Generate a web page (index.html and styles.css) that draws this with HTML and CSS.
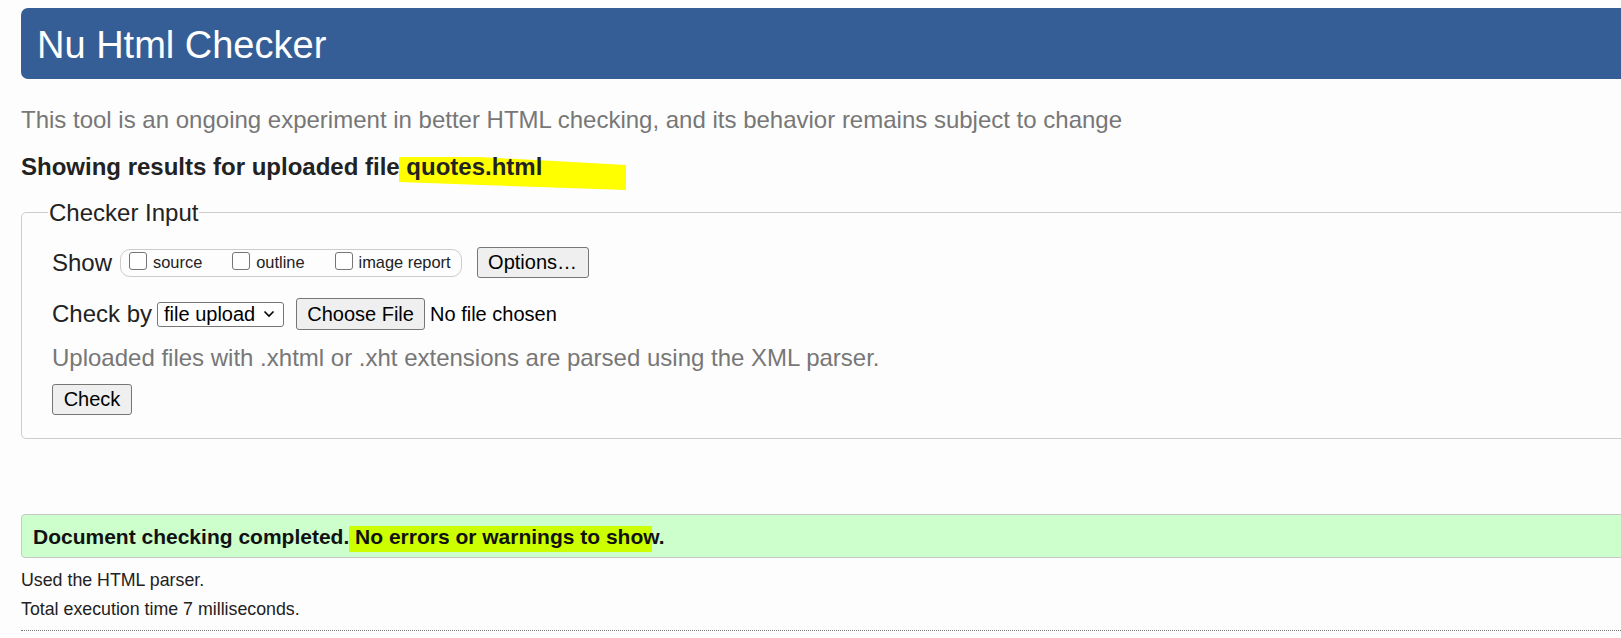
FILE: index.html
```html
<!DOCTYPE html>
<html lang="en">
<head>
<meta charset="utf-8">
<title>Showing results for quotes.html - Nu Html Checker</title>
<link rel="stylesheet" href="styles.css">
</head>
<body>
<div class="page">
  <header class="masthead">
    <h1>Nu Html Checker</h1>
  </header>
  <p class="tagline">This tool is an ongoing experiment in better HTML checking, and its behavior remains subject to change</p>
  <h2 class="result-title">
    <span class="title-text">Showing results for uploaded file quotes.html</span>
    <svg class="marker-yellow" width="240" height="40" viewBox="0 0 240 40" aria-hidden="true">
      <polygon points="0,4 80,4 227,12 227,37 140,34 0,29" fill="#ffff00"/>
    </svg>
  </h2>
  <form class="checker-form">
    <fieldset class="checker-input">
      <legend>Checker Input</legend>
      <div class="row row-show">
        <span class="row-label">Show</span>
        <div class="show-group">
          <label class="opt"><span class="box"></span>source</label>
          <label class="opt"><span class="box"></span>outline</label>
          <label class="opt"><span class="box"></span>image report</label>
        </div>
        <span class="btn btn-options">Options…</span>
      </div>
      <div class="row row-checkby">
        <span class="row-label">Check by</span>
        <span class="select">file upload
          <svg class="chev" width="12" height="8" viewBox="0 0 12 8" aria-hidden="true"><path d="M1.5 1.5 L6 6 L10.5 1.5" fill="none" stroke="#000" stroke-width="1.6"/></svg>
        </span>
        <span class="btn btn-file">Choose File</span>
        <span class="file-status">No file chosen</span>
      </div>
      <p class="hint">Uploaded files with .xhtml or .xht extensions are parsed using the XML parser.</p>
      <span class="btn btn-check">Check</span>
    </fieldset>
  </form>
  <div class="success">
    <span class="marker-lime" aria-hidden="true"></span>
    <span class="success-text">Document checking completed. No errors or warnings to show.</span>
  </div>
  <p class="meta meta-first">Used the HTML parser.</p>
  <p class="meta">Total execution time 7 milliseconds.</p>
  <div class="dotted-rule"></div>
</div>
</body>
</html>
```
FILE: styles.css
```css
html, body {
  margin: 0;
  padding: 0;
  overflow: hidden;
  background: #fdfdfd;
}
body {
  font-family: "Liberation Sans", Arial, sans-serif;
  color: #222;
}
.page {
  width: 1700px;
  padding: 8px 0 0 21px;
}
.masthead {
  height: 71px;
  background: #365e96;
  border-radius: 7px;
  display: flex;
  align-items: center;
  padding-left: 16px;
}
.masthead h1 {
  margin: 0;
  font-size: 38px;
  font-weight: normal;
  color: #fff;
  line-height: 44px;
  position: relative;
  top: 1px;
}
.tagline {
  margin: 27px 0 0;
  font-size: 24px;
  line-height: 28px;
  color: #777;
}
.result-title {
  position: relative;
  margin: 19px 0 0;
  font-size: 24px;
  line-height: 28px;
  font-weight: bold;
  color: #222;
}
.title-text {
  position: relative;
  z-index: 1;
}
.marker-yellow {
  position: absolute;
  left: 378px;
  top: 0px;
  z-index: 0;
}
.checker-form {
  margin: 0;
}
.checker-input {
  margin: 17px 0 0;
  padding: 21px 0 23px 30px;
  border: 1px solid #ccc;
  border-radius: 5px;
  min-width: 0;
}
.checker-input legend {
  margin-left: -4px;
  padding: 0 1px;
  font-size: 24px;
  line-height: 28px;
  color: #222;
  position: relative;
  top: 1px;
}
.row {
  display: flex;
  align-items: center;
}
.row-label {
  font-size: 24px;
  line-height: 28px;
  color: #222;
}
.row-show {
  height: 31px;
}
.show-group {
  margin-left: 8px;
  height: 28px;
  box-sizing: border-box;
  border: 1px solid #ccc;
  border-radius: 10px;
  padding: 0 10px 0 8px;
  display: flex;
  align-items: center;
  gap: 30px;
}
.opt {
  display: flex;
  align-items: center;
  gap: 6px;
  font-size: 16.4px;
  color: #222;
}
.box {
  width: 18px;
  height: 18px;
  box-sizing: border-box;
  border: 1px solid #767676;
  border-radius: 3px;
  background: #fff;
  margin-top: -4px;
}
.btn {
  display: inline-flex;
  align-items: center;
  justify-content: center;
  box-sizing: border-box;
  background: #efefef;
  border: 1px solid #767676;
  border-radius: 3px;
  font-size: 20px;
  color: #000;
}
.btn-options {
  margin-left: 15px;
  width: 112px;
  height: 31px;
}
.row-checkby {
  margin-top: 20px;
  height: 32px;
}
.select {
  margin-left: 5px;
  width: 127px;
  height: 25px;
  box-sizing: border-box;
  border: 1px solid #767676;
  border-radius: 3px;
  background: #fff;
  font-size: 20px;
  color: #000;
  padding-left: 6px;
  display: flex;
  align-items: center;
  justify-content: space-between;
  padding-right: 8px;
}
.chev {
  display: block;
}
.btn-file {
  margin-left: 12px;
  width: 129px;
  height: 32px;
}
.file-status {
  margin-left: 5px;
  font-size: 20px;
  color: #000;
}
.hint {
  margin: 14px 0 0;
  font-size: 24px;
  line-height: 28px;
  color: #777;
}
.btn-check {
  margin-top: 12px;
  width: 80px;
  height: 31px;
}
.success {
  position: relative;
  margin-top: 75px;
  height: 44px;
  box-sizing: border-box;
  border: 1px solid #c8c8c8;
  border-radius: 4px;
  background: #ccffcc;
  display: flex;
  align-items: center;
  padding-left: 11px;
}
.marker-lime {
  position: absolute;
  left: 327px;
  top: 11px;
  width: 303px;
  height: 26px;
  background: #ccff00;
}
.success-text {
  position: relative;
  font-size: 21px;
  font-weight: bold;
  color: #111;
  top: 1px;
}
.meta {
  margin: 8px 0 0;
  font-size: 17.8px;
  line-height: 21px;
  color: #222;
}
.meta-first {
  margin-top: 12px;
}
.dotted-rule {
  margin-top: 10px;
  border-top: 1px dotted #777;
}
```
